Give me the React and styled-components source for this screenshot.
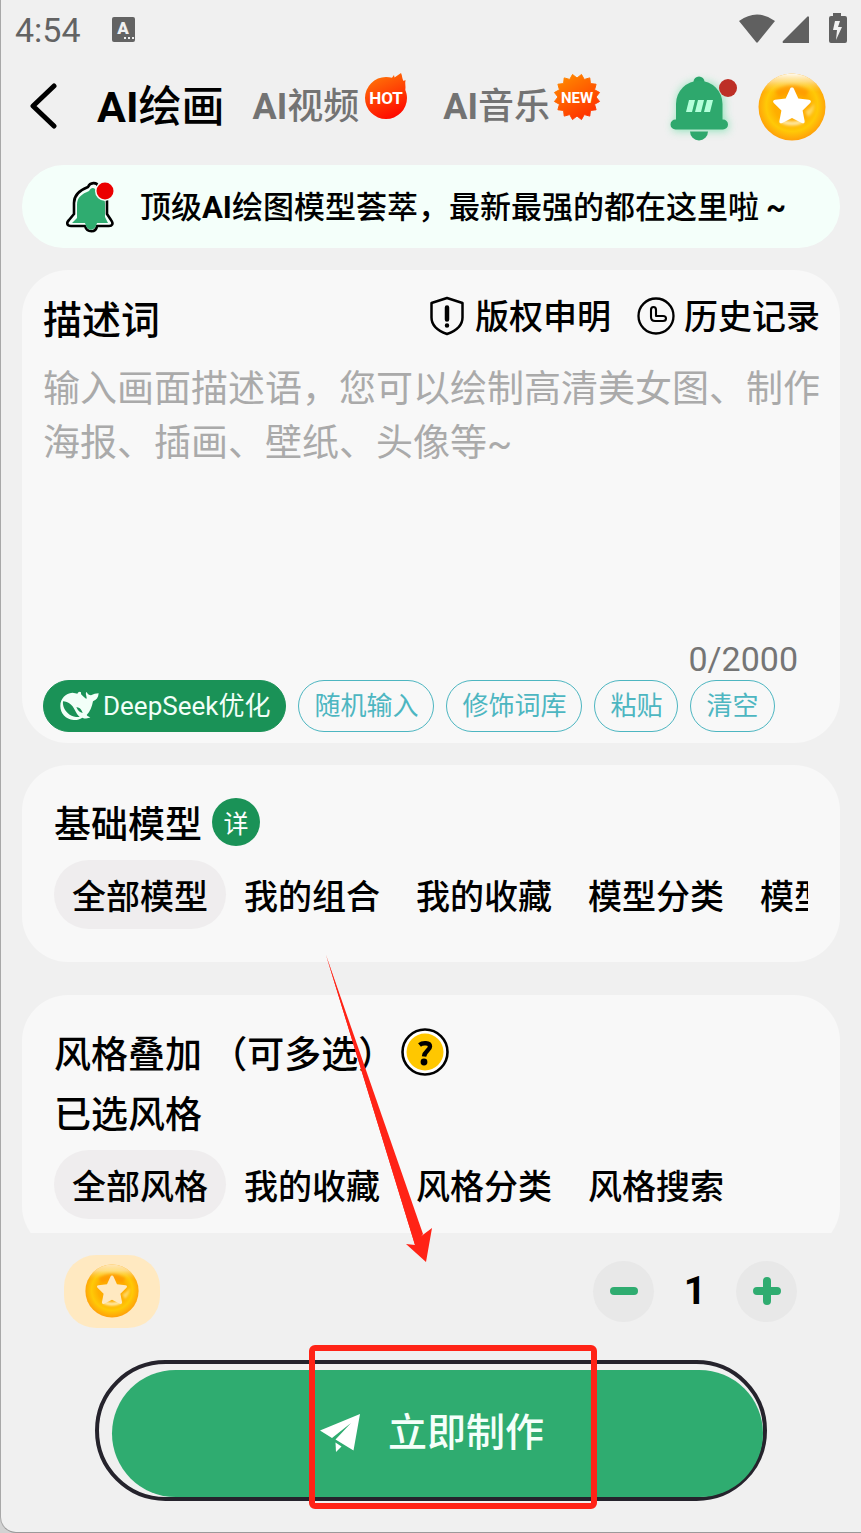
import React, { useState } from "react";
import styled, { createGlobalStyle, css } from "styled-components";

const GlobalStyle = createGlobalStyle`
  * {
    box-sizing: border-box;
  }

  body {
    margin: 0;
    background: #d2d2d2;
    color: #000;
    font-family: Roboto, "Noto Sans CJK SC", sans-serif;
  }

  button,
  textarea {
    font-family: inherit;
  }

  button {
    padding: 0;
    border: none;
    background: none;
    color: inherit;
    cursor: pointer;
  }
`;

const cjkFont = css`
  font-family: "Noto Sans CJK SC", sans-serif;
`;

const Latin = styled.span`
  font-family: Roboto, sans-serif;
  font-weight: 700;
`;

const Screen = styled.div`
  display: flex;
  flex-direction: column;
  height: 100vh;
  background: #f0f0f0;
  border-left: 1px solid #a8a8a8;
  border-bottom: 1px solid #9a9a9a;
  border-bottom-left-radius: 16px;
  overflow: hidden;
`;

// Status bar
const StatusBar = styled.div`
  display: flex;
  align-items: center;
  flex-shrink: 0;
  height: 60px;
  padding: 0 14px;
  color: #636363;
`;

const Clock = styled.span`
  font-size: 34px;
  line-height: 40px;
`;

const KeyboardIcon = styled.svg`
  width: 24px;
  height: 26px;
  margin-left: 31px;
`;

const StatusIcons = styled.svg`
  width: 108px;
  height: 36px;
  margin-left: auto;
  overflow: visible;
`;

// Navigation
const Nav = styled.nav`
  display: flex;
  align-items: center;
  flex-shrink: 0;
  height: 94px;
  padding: 0 35px 0 28px;
`;

const BackButton = styled.button`
  display: flex;
  width: 30px;
  margin-right: 38px;
`;

const NavTab = styled.button`
  ${cjkFont}
  display: flex;
  align-items: center;
  margin-right: ${({ $active }) => ($active ? "28px" : "34px")};
  padding-bottom: 4px;
  font-size: ${({ $active }) => ($active ? "43px" : "36px")};
  font-weight: 500;
  line-height: 60px;
  color: ${({ $active }) => ($active ? "#000" : "#737373")};
  white-space: nowrap;
`;

const NavBadge = styled.svg`
  width: 46px;
  height: 48px;
  margin: 0 0 16px 4px;
  overflow: visible;
`;

const NavActions = styled.div`
  display: flex;
  align-items: center;
  gap: 21px;
  margin-left: auto;
`;

const IconButton = styled.button`
  display: flex;
`;

// Content
const Content = styled.main`
  flex: 1;
  min-height: 0;
  padding: 11px 21px 0;
  overflow-y: auto;
  scrollbar-width: none;
`;

const Notice = styled.div`
  ${cjkFont}
  display: flex;
  align-items: center;
  gap: 22px;
  height: 83px;
  margin-bottom: 22px;
  padding: 0 40px;
  border-radius: 42px;
  background: #f4fffa;
  font-size: 31px;
  font-weight: 500;
  line-height: 44px;
  white-space: nowrap;
  overflow: hidden;
`;

const Card = styled.section`
  margin-bottom: ${({ $gap }) => $gap || 22}px;
  padding: ${({ $padding }) => $padding || "32px"};
  border-radius: 46px;
  background: #f8f8f8;
`;

const CardHeader = styled.div`
  display: flex;
  align-items: flex-start;
  justify-content: space-between;
  height: 60px;
`;

const PromptLabel = styled.label`
  font-size: 39px;
  font-weight: 500;
  line-height: 62px;
`;

const HeaderLinks = styled.div`
  display: flex;
  gap: 26px;
`;

const HeaderLink = styled.button`
  display: flex;
  align-items: center;
  gap: 9px;
  font-size: 34px;
  font-weight: 500;
  line-height: 54px;
  white-space: nowrap;
`;

const Prompt = styled.textarea`
  display: block;
  width: 100%;
  height: 275px;
  margin-top: 13px;
  padding: 0;
  border: none;
  outline: none;
  resize: none;
  background: transparent;
  color: #000;
  font-size: 37px;
  line-height: 54px;
  overflow: hidden;

  &::placeholder {
    color: #aaa;
    opacity: 1;
  }
`;

const Counter = styled.div`
  padding-right: 22px;
  color: #757575;
  font-size: 34px;
  line-height: 42px;
  text-align: right;
`;

const Chips = styled.div`
  display: flex;
  gap: 12px;
`;

const Chip = styled.button`
  display: flex;
  align-items: center;
  gap: 4px;
  height: 52px;
  padding: 0 15px;
  border: 1px solid #4db6c1;
  border-radius: 26px;
  color: #4db6c1;
  font-size: 26px;
  line-height: 36px;
  white-space: nowrap;

  ${({ $filled }) =>
    $filled &&
    css`
      border-color: #1a9257;
      background: #1a9257;
      color: #f2fff8;
    `}
`;

const SectionTitle = styled.h2`
  ${cjkFont}
  display: flex;
  align-items: center;
  gap: ${({ $gap }) => $gap || 0}px;
  margin: 0;
  font-size: 37px;
  font-weight: 500;
  line-height: 60px;
  white-space: nowrap;
`;

const DetailButton = styled.button`
  width: 48px;
  height: 48px;
  border-radius: 50%;
  background: #1a9257;
  color: #fff;
  font-size: 25px;
  line-height: 48px;
`;

const Tabs = styled.div`
  display: flex;
  margin-top: 8px;
  overflow-x: auto;
  scrollbar-width: none;
`;

const Tab = styled.button`
  ${cjkFont}
  flex-shrink: 0;
  height: 69px;
  padding: 0 18px;
  border-radius: 35px;
  background: ${({ $active }) => ($active ? "#efedee" : "transparent")};
  font-size: 34px;
  font-weight: 500;
  line-height: 66px;
`;

// Footer
const Footer = styled.footer`
  position: relative;
  flex-shrink: 0;
  padding: 21px 64px 31px 63px;
`;

const FooterRow = styled.div`
  display: flex;
  align-items: center;
  justify-content: space-between;
  height: 74px;
`;

const CoinButton = styled.button`
  display: flex;
  align-items: center;
  justify-content: center;
  width: 96px;
  height: 73px;
  border-radius: 32px;
  background: #ffe9c1;
`;

const Stepper = styled.div`
  display: flex;
  align-items: center;
`;

const StepButton = styled.button`
  display: flex;
  align-items: center;
  justify-content: center;
  width: 61px;
  height: 61px;
  border-radius: 50%;
  background: #e8e8e8;
`;

const Count = styled.output`
  width: 82px;
  font-size: 39px;
  font-weight: 700;
  line-height: 61px;
  text-align: center;
`;

const MakeButton = styled.button`
  position: relative;
  display: flex;
  width: calc(100% - 61px);
  height: 141px;
  margin: 32px 30px 0 31px;
  padding: 6px 0 0 13px;
  border: 4px solid #25232c;
  border-radius: 71px;
`;

const MakeFill = styled.span`
  display: flex;
  align-items: center;
  justify-content: center;
  gap: 28px;
  width: 100%;
  height: 100%;
  padding: 0 11px 2px 0;
  border-radius: 64px;
  background: #2fac70;
  color: #f4fffa;
  font-size: 39px;
  font-weight: 500;
  line-height: 58px;
`;

const Highlight = styled.span`
  position: absolute;
  top: -19px;
  left: 50%;
  width: 288px;
  height: 164px;
  margin-left: -122px;
  border: 6px solid #ff2316;
  border-radius: 6px;
  pointer-events: none;
`;

const Arrow = styled.svg`
  position: absolute;
  top: -278px;
  left: 324px;
  width: 108px;
  height: 308px;
  pointer-events: none;
`;

const STAR =
  "M34 14.500c1 0 1.600.5 2 1.400l4.300 9.600 10.700 1.200c2 .3 2.500 1.800 1.200 3.200l-7.600 7.500 2 10.600c.3 2-1 2.900-2.800 2L34 45l-9.800 5c-1.800.9-3.100 0-2.800-2l2-10.600-7.600-7.500c-1.300-1.400-.8-2.900 1.200-3.200l10.700-1.200L32 15.900c.4-.9 1-1.400 2-1.400z";

const Coin = ({ size, id, star }) => (
  <svg width={size} height={size} viewBox="0 0 68 68" aria-hidden="true">
    <defs>
      <radialGradient id={`${id}-face`} cx="50%" cy="48%" r="52%">
        <stop offset="0" stopColor="#ffa800" />
        <stop offset="0.5" stopColor="#ffae00" />
        <stop offset="0.74" stopColor="#ffc907" />
        <stop offset="1" stopColor="#ff9f0a" />
      </radialGradient>
      <linearGradient id={`${id}-shine`} x1="0" y1="0" x2="0" y2="1">
        <stop offset="0" stopColor={star} stopOpacity="0.95" />
        <stop offset="0.12" stopColor="#ffe6a8" stopOpacity="0.75" />
        <stop offset="0.28" stopColor="#ffd040" stopOpacity="0" />
      </linearGradient>
      <filter id={`${id}-soft`} x="-50%" y="-50%" width="200%" height="200%">
        <feGaussianBlur stdDeviation="1.6" />
      </filter>
    </defs>
    <circle cx="34" cy="34" r="33.500" fill={`url(#${id}-face)`} />
    <circle cx="34" cy="34" r="33.500" fill={`url(#${id}-shine)`} />
    <g filter={`url(#${id}-soft)`}>
      <path d="M17 18q17-11 34 0l-4 6q-13-7-26 0z" fill="#ff9800" opacity="0.75" />
      <path d="M47 38q6-2 9-8 1 9-6 14z" fill="#ffe17a" opacity="0.8" />
      <path d="M23 46q11 5 22 0v4q-11 5-22 0z" fill="#ffedb0" />
    </g>
    <path d={STAR} fill={star} />
  </svg>
);

const HotBadge = () => (
  <NavBadge viewBox="0 0 46 48" aria-hidden="true">
    <defs>
      <linearGradient id="hot" x1="0.2" y1="0" x2="0.6" y2="1">
        <stop offset="0" stopColor="#ff7a08" />
        <stop offset="1" stopColor="#ff0900" />
      </linearGradient>
    </defs>
    <path
      d="M23 4c2 0 4 .2 6 .8L31 2l.5 2.500L38 0c1.500 3 1 6 2.500 8l2-1c-.8 4 .5 6-.2 10 1 2.500 1.700 5 1.700 8A21 21 0 1 1 23 4z"
      fill="url(#hot)"
    />
    <text x="23" y="31" textAnchor="middle" fontSize="17" fontWeight="700" fontFamily="Roboto, sans-serif" fill="#fff">
      HOT
    </text>
  </NavBadge>
);

const burst = Array.from({ length: 32 }, (_, i) => {
  const angle = (i * Math.PI) / 16 + Math.PI / 16;
  const r = i % 2 ? 19 : 23;
  return `${23 + r * Math.cos(angle)},${24 + r * Math.sin(angle)}`;
}).join(" ");

const NewBadge = () => (
  <NavBadge viewBox="0 0 46 48" aria-hidden="true">
    <defs>
      <linearGradient id="new" x1="0.2" y1="0" x2="0.8" y2="1">
        <stop offset="0" stopColor="#ff8a00" />
        <stop offset="1" stopColor="#ff2a00" />
      </linearGradient>
    </defs>
    <polygon points={burst} fill="url(#new)" stroke="url(#new)" strokeWidth="1" strokeLinejoin="round" />
    <text x="23" y="30" textAnchor="middle" fontSize="15" fontWeight="700" fontFamily="Roboto, sans-serif" fill="#fff">
      NEW
    </text>
  </NavBadge>
);

const BellIcon = () => (
  <svg width="70" height="72" viewBox="0 0 70 72" overflow="visible" aria-hidden="true">
    <defs>
      <filter id="bell-glow" x="-30%" y="-30%" width="160%" height="160%">
        <feGaussianBlur stdDeviation="4" />
      </filter>
    </defs>
    <path
      d="M10 32Q10 12 33 10Q57 12 57 32V49H61V60H6V49H10z"
      fill="#43d98f"
      opacity="0.55"
      filter="url(#bell-glow)"
    />
    <circle cx="32" cy="11" r="5.500" fill="#2ba56b" />
    <path
      d="M9 33a23 23 0 0 1 46.500 0v15.500h.5a5 5 0 0 1 0 10H8.500a5 5 0 0 1 0-10h.5z"
      fill="#2ea86d"
    />
    <path d="M23 60.500h18a9 9 0 0 1-18 0z" fill="#2ea86d" />
    <path d="M22 29h6l-3 12h-6zM31 29h6l-3 12h-6zM40 29h6l-3 12h-6z" fill="#b4ffda" />
    <circle cx="61" cy="17" r="9" fill="#bd2f26" />
  </svg>
);

const NoticeBell = () => (
  <svg width="56" height="56" viewBox="0 0 56 56" aria-hidden="true">
    <path
      d="M24 6c2-5 9-5 10-1 7 3 9 8 9 15v13l4 6c3 4 1 6-2 6H33c-1 7-10 7-12 0H7c-4 0-5-3-2-6l5-6V22c0-8 6-13 14-16z"
      fill="#f4fffa"
      stroke="#000"
      strokeWidth="2.600"
      strokeLinejoin="round"
      transform="translate(2 2)"
    />
    <path
      d="M27 12c2-4 6-4 7 0 6 2 9 7 9 13v13l3 6H35c-2 9-10 9-12 0H10l5-5V26c0-8 5-11 12-14z"
      fill="#2fac70"
    />
    <circle cx="43" cy="12" r="10" fill="#f4fffa" />
    <circle cx="43" cy="12" r="8.500" fill="#eb0000" />
  </svg>
);

const ShieldIcon = () => (
  <svg width="36" height="42" viewBox="0 0 36 42" fill="none" stroke="#000" aria-hidden="true">
    <path d="M17 2l15.500 5v14.500c0 8-7 13.500-15.500 16.500C8.500 35 1.500 29.500 1.500 21.500V7z" strokeWidth="2.500" strokeLinejoin="round" />
    <path d="M17 11.500v12M17 29.500v.1" strokeWidth="4.500" strokeLinecap="round" />
  </svg>
);

const HistoryIcon = () => (
  <svg width="38" height="42" viewBox="0 0 38 42" fill="none" stroke="#000" strokeLinejoin="round" aria-hidden="true">
    <circle cx="19" cy="20" r="17.500" strokeWidth="2.300" />
    <path d="M16.500 11q2.500 0 2.500 3v6h7q3 0 3 2.500t-3 2.500h-8q-4 0-4-4v-7q0-3 2.500-3z" strokeWidth="2.100" />
  </svg>
);

const WhaleIcon = () => (
  <svg width="40" height="32" viewBox="178 180 120 96" aria-hidden="true">
    <path
      fillRule="evenodd"
      fill="#f2fff8"
      d="M182 228C182 205 198 190 218 188c7 0 11 3 15 3 2-5 8-8 11-4-1 6 2 9 8 13 4 3 6 6 9 6 1-6-4-12-2-20 4 1 5 9 15 10 7-4 15-6 23-6-1 13-7 20-17 24-3 17-9 31-19 41 3 4 8 6 11 7-6 4-16 5-24 1-8 5-17 8-26 7-24-2-40-19-40-42zM190 214c-2 14 6 30 20 40 8 5 20 8 30 7-6-6-10-12-15-22-7-14-19-25-35-25zM230 232c8-2 17 8 19 17-9-1-14-7-19-17z"
    />
  </svg>
);

const PlaneIcon = () => (
  <svg width="40" height="38" viewBox="0 0 40 38" fill="#fff" aria-hidden="true">
    <path d="M40 0L0 16.500l12 7.500L31 9 15.500 25.500 33.500 36.500z" />
    <path d="M15.500 28.500l6 4-5.500 5.500z" />
  </svg>
);

const QuestionIcon = () => (
  <svg width="48" height="48" viewBox="0 0 48 48" aria-hidden="true">
    <circle cx="24" cy="24" r="22.500" fill="#fff" stroke="#000" strokeWidth="2.600" />
    <circle cx="24" cy="24" r="18.500" fill="#ffc700" />
    <path
      d="M18.500 17c3-2.500 10.500-2.500 10.500 1.500 0 4-5.500 4.500-6 10"
      fill="none"
      stroke="#000"
      strokeWidth="4.400"
    />
    <circle cx="23" cy="34" r="3.400" />
  </svg>
);

const PLACEHOLDER =
  "输入画面描述语，您可以绘制高清美女图、制作海报、插画、壁纸、头像等~";
const CHIPS = ["随机输入", "修饰词库", "粘贴", "清空"];
const MODEL_TABS = ["全部模型", "我的组合", "我的收藏", "模型分类", "模型搜索"];
const STYLE_TABS = ["全部风格", "我的收藏", "风格分类", "风格搜索"];

const TabList = ({ items }) => {
  const [active, setActive] = useState(items[0]);

  return (
    <Tabs role="tablist">
      {items.map((item) => (
        <Tab
          key={item}
          role="tab"
          aria-selected={item === active}
          $active={item === active}
          onClick={() => setActive(item)}
        >
          {item}
        </Tab>
      ))}
    </Tabs>
  );
};

const App = () => {
  const [prompt, setPrompt] = useState("");
  const [count, setCount] = useState(1);

  return (
    <>
      <GlobalStyle />
      <Screen>
        <StatusBar>
          <Clock>4:54</Clock>
          <KeyboardIcon viewBox="0 0 24 26" aria-hidden="true">
            <rect x="0" y="0" width="23" height="25" rx="2" fill="#636363" />
            <text x="11" y="17" textAnchor="middle" fontSize="17" fontWeight="900" fill="#f0f0f0">
              A
            </text>
            <path d="M12 20h2v2h-2zM16 20h2v2h-2zM20 20h2v2h-2z" fill="#f0f0f0" />
          </KeyboardIcon>
          <StatusIcons viewBox="0 2 108 36" fill="#606060" aria-hidden="true">
            <path d="M0 11q18-13 36 0L19 32q-1 1.500-2 0z" />
            <path d="M70 7v26H44q-1-1 0-2L68 7q1-1.500 2 0z" />
            <path
              fillRule="evenodd"
              d="M94 3h8v3h4q2 0 2 2v23q0 2-2 2H92q-2 0-2-2V8q0-2 2-2h2zM101 11h-5l-2 9h4l-1 10 6-13h-4z"
            />
          </StatusIcons>
        </StatusBar>

        <Nav>
          <BackButton aria-label="返回">
            <svg width="30" height="48" viewBox="0 0 30 48" fill="none" aria-hidden="true">
              <path d="M25 3L4 23l21 20" stroke="#000" strokeWidth="5" strokeLinecap="round" strokeLinejoin="round" />
            </svg>
          </BackButton>
          <NavTab $active>
            <span>
              <Latin>AI</Latin>绘画
            </span>
          </NavTab>
          <NavTab>
            <span>
              <Latin>AI</Latin>视频
            </span>
            <HotBadge />
          </NavTab>
          <NavTab>
            <span>
              <Latin>AI</Latin>音乐
            </span>
            <NewBadge />
          </NavTab>
          <NavActions>
            <IconButton aria-label="通知">
              <BellIcon />
            </IconButton>
            <IconButton aria-label="金币">
              <Coin size={68} id="nav-coin" star="#fff" />
            </IconButton>
          </NavActions>
        </Nav>

        <Content>
          <Notice>
            <NoticeBell />
            <span>
              顶级<Latin>AI</Latin>绘图模型荟萃，最新最强的都在这里啦 <Latin>~</Latin>
            </span>
          </Notice>

          <Card $padding="20px 20px 11px 21px">
            <CardHeader>
              <PromptLabel htmlFor="prompt">描述词</PromptLabel>
              <HeaderLinks>
                <HeaderLink>
                  <ShieldIcon />
                  版权申明
                </HeaderLink>
                <HeaderLink>
                  <HistoryIcon />
                  历史记录
                </HeaderLink>
              </HeaderLinks>
            </CardHeader>
            <Prompt
              id="prompt"
              maxLength={2000}
              placeholder={PLACEHOLDER}
              value={prompt}
              onChange={(e) => setPrompt(e.target.value)}
            />
            <Counter>{prompt.length}/2000</Counter>
            <Chips>
              <Chip $filled>
                <WhaleIcon />
                DeepSeek优化
              </Chip>
              {CHIPS.map((chip) => (
                <Chip key={chip} onClick={chip === "清空" ? () => setPrompt("") : undefined}>
                  {chip}
                </Chip>
              ))}
            </Chips>
          </Card>

          <Card $gap={33} $padding="27px 32px 33px">
            <SectionTitle $gap={10}>
              基础模型
              <DetailButton>详</DetailButton>
            </SectionTitle>
            <TabList items={MODEL_TABS} />
          </Card>

          <Card $padding="27px 32px 33px">
            <SectionTitle $gap={6}>
              风格叠加 （可多选）
              <IconButton aria-label="帮助">
                <QuestionIcon />
              </IconButton>
            </SectionTitle>
            <SectionTitle as="h3">已选风格</SectionTitle>
            <TabList items={STYLE_TABS} />
          </Card>
        </Content>

        <Footer>
          <FooterRow>
            <CoinButton aria-label="金币">
              <Coin size={54} id="footer-coin" star="#ffe9c1" />
            </CoinButton>
            <Stepper>
              <StepButton aria-label="减少" onClick={() => setCount(Math.max(1, count - 1))}>
                <svg width="30" height="30" viewBox="0 0 30 30" aria-hidden="true">
                  <path d="M5 15h20" stroke="#2fac70" strokeWidth="8" strokeLinecap="round" />
                </svg>
              </StepButton>
              <Count>{count}</Count>
              <StepButton aria-label="增加" onClick={() => setCount(count + 1)}>
                <svg width="30" height="30" viewBox="0 0 30 30" aria-hidden="true">
                  <path d="M5 15h20M15 5v20" stroke="#2fac70" strokeWidth="8" strokeLinecap="round" />
                </svg>
              </StepButton>
            </Stepper>
          </FooterRow>
          <MakeButton>
            <MakeFill>
              <PlaneIcon />
              立即制作
            </MakeFill>
            <Highlight />
          </MakeButton>
          <Arrow viewBox="0 0 108 308" aria-hidden="true">
            <path d="M1 0L95 282 107 273 101 307 81 289 90 290z" fill="#ff2316" />
            <path d="M1 0L98 279l-8 11z" fill="#ff2316" />
          </Arrow>
        </Footer>
      </Screen>
    </>
  );
};

export default App;
